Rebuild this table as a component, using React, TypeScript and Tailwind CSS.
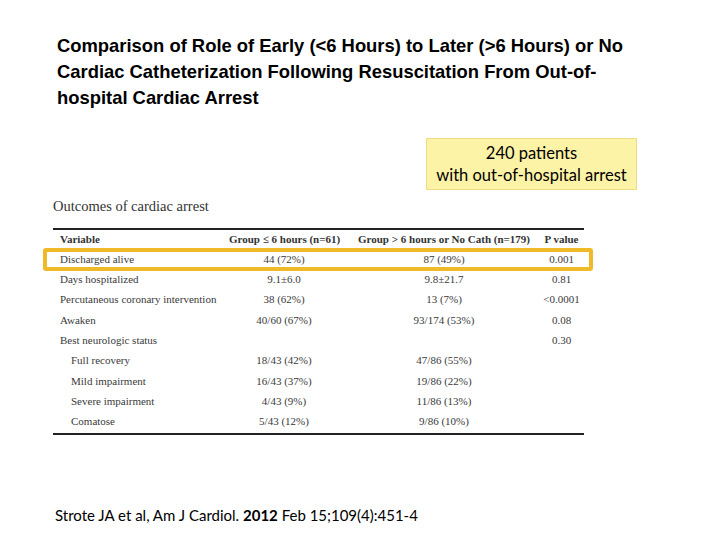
import React from "react";

const rows: { label: string; a: string; b: string; p: string; indent?: boolean; hl?: boolean }[] = [
  { label: "Discharged alive", a: "44 (72%)", b: "87 (49%)", p: "0.001", hl: true },
  { label: "Days hospitalized", a: "9.1±6.0", b: "9.8±21.7", p: "0.81" },
  { label: "Percutaneous coronary intervention", a: "38 (62%)", b: "13 (7%)", p: "<0.0001" },
  { label: "Awaken", a: "40/60 (67%)", b: "93/174 (53%)", p: "0.08" },
  { label: "Best neurologic status", a: "", b: "", p: "0.30" },
  { label: "Full recovery", a: "18/43 (42%)", b: "47/86 (55%)", p: "", indent: true },
  { label: "Mild impairment", a: "16/43 (37%)", b: "19/86 (22%)", p: "", indent: true },
  { label: "Severe impairment", a: "4/43 (9%)", b: "11/86 (13%)", p: "", indent: true },
  { label: "Comatose", a: "5/43 (12%)", b: "9/86 (10%)", p: "", indent: true },
];

export default function App() {
  return (
    <div className="w-[720px] h-[540px] bg-white relative overflow-hidden">
      <div className="pt-[33px] pl-[57px] font-['Liberation_Sans',Arial,sans-serif] font-bold text-[18.4px] leading-[26px] text-black">
        Comparison of Role of Early (&lt;6 Hours) to Later (&gt;6 Hours) or No
        <br />
        Cardiac Catheterization Following Resuscitation From Out-of-
        <br />
        hospital Cardiac Arrest
      </div>

      <div className="flex justify-end pr-[83px] mt-[27px]">
        <div className="w-[211px] h-[52px] bg-[#fdf3a6] border border-[#eedd88] flex flex-col items-center justify-center font-['Lato',sans-serif] text-[16.5px] leading-[22px] text-black">
          <div>240 patients</div>
          <div>with out-of-hospital arrest</div>
        </div>
      </div>

      <div className="ml-[53px] w-[531px] mt-[7px] font-['Liberation_Serif','Times_New_Roman',serif] text-[#222]">
        <div className="text-[14.5px] leading-[18px] text-[#333] h-[23px]">Outcomes of cardiac arrest</div>
        <div className="h-[2px] bg-[#222] mt-[8px]" />
        <div className="flex items-center h-[19px] text-[11px] font-bold text-[#333] whitespace-nowrap font-['Liberation_Serif',serif]">
          <div className="w-[176px] pl-[7px]">Variable</div>
          <div className="w-[110px] text-center">Group ≤ 6 hours (n=61)</div>
          <div className="w-[196px] text-center pl-[14px]">Group &gt; 6 hours or No Cath (n=179)</div>
          <div className="flex-1 text-center pl-[4px]">P value</div>
        </div>
        {rows.map((r) => (
          <div
            key={r.label}
            className="flex items-center h-[20.3px] text-[11px] text-[#3a3a3a] relative whitespace-nowrap font-['Liberation_Serif',serif]"
          >
            {r.hl && (
              <div className="absolute left-[-10px] right-[-9px] top-[-1px] bottom-[-2px] border-[4px] border-[#f0b928] rounded-[3px]" />
            )}
            <div className={"w-[176px] " + (r.indent ? "pl-[18px]" : "pl-[7px]")}>{r.label}</div>
            <div className="w-[110px] text-center">{r.a}</div>
            <div className="w-[196px] text-center pl-[14px]">{r.b}</div>
            <div className="flex-1 text-center pl-[4px]">{r.p}</div>
          </div>
        ))}
        <div className="h-[2px] bg-[#222] mt-[1px]" />
      </div>

      <div className="absolute left-[55px] top-[505px] font-['Lato',sans-serif] text-[15px] leading-[20px] text-black">
        Strote JA et al, Am J Cardiol. <span className="font-bold">2012</span> Feb 15;109(4):451-4
      </div>
    </div>
  );
}
